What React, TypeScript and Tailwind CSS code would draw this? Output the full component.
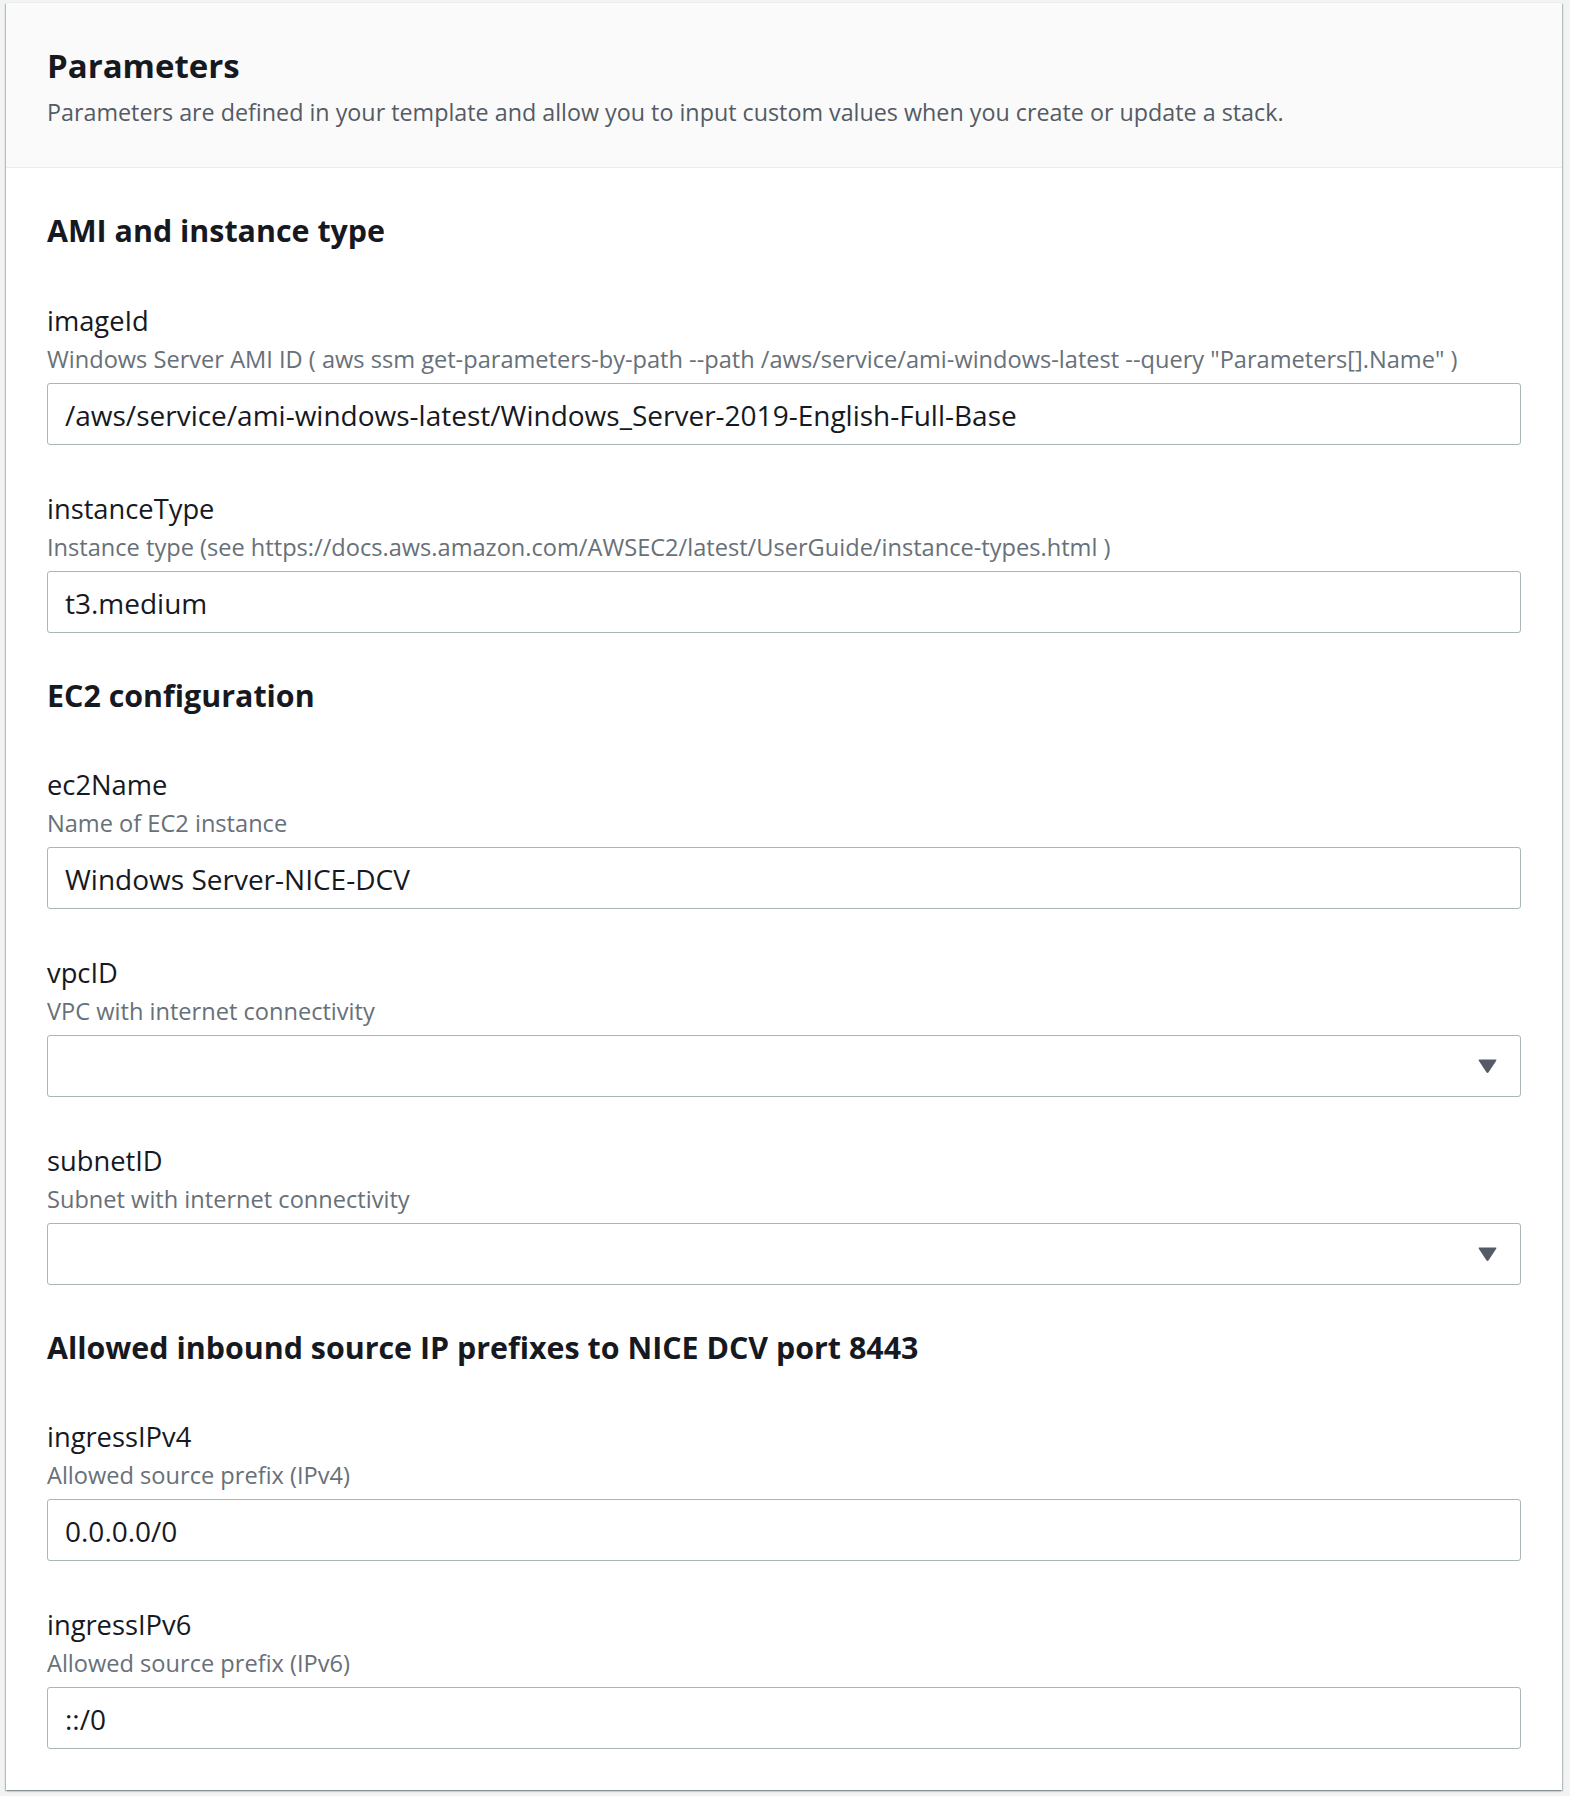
import React from "react";

const font = { fontFamily: '"Open Sans", "Noto Sans", sans-serif' };

function Field({ label, desc, value, select }: { label: string; desc: string; value?: string; select?: boolean }) {
  return (
    <div className="flex flex-col">
      <div className="h-[30px] leading-[30px] text-[27.3px] text-[#16191f]">{label}</div>
      <div className="mt-[10px] h-[26px] leading-[26px] text-[23.6px] text-[#687078] whitespace-nowrap">{desc}</div>
      <div className="mt-[11px] h-[62px] rounded-[3px] border border-[#aab7b8] bg-white flex items-center pl-[17px] pr-[22px]">
        {select ? (
          <div className="ml-auto flex items-center">
            <svg width="21" height="16" viewBox="0 0 21 16">
              <path d="M2.5 1.5 H18.5 Q20 1.5 19.2 2.8 L11.6 14.2 Q10.5 15.6 9.4 14.2 L1.8 2.8 Q1 1.5 2.5 1.5 Z" fill="#545b64" />
            </svg>
          </div>
        ) : (
          <span className="pt-[1px] text-[28px] text-[#16191f] whitespace-nowrap">{value}</span>
        )}
      </div>
    </div>
  );
}

function SectionHeading({ children }: { children: React.ReactNode }) {
  return <div className="h-[36px] leading-[36px] text-[30.4px] font-bold text-[#16191f] whitespace-nowrap">{children}</div>;
}

export default function App() {
  return (
    <div className="min-h-[1796px] w-[1570px] bg-[#f2f3f3] pt-[3px] pl-[6px] pr-[8px] pb-[7px]" style={font}>
      <div className="bg-white shadow-[0_1px_2px_0_rgba(0,28,36,0.35),1px_1px_1px_0_rgba(0,28,36,0.15),-1px_1px_1px_0_rgba(0,28,36,0.15)]">
        <div className="bg-[#fafafa] border-b border-[#eaeded] px-[41px] pt-[45px] pb-[41px]">
          <div className="h-[36px] leading-[36px] text-[33px] font-bold text-[#16191f]">Parameters</div>
          <div className="mt-[14px] h-[28px] leading-[28px] text-[23.3px] text-[#545b64] whitespace-nowrap">
            Parameters are defined in your template and allow you to input custom values when you create or update a stack.
          </div>
        </div>
        <div className="px-[41px] pt-[45px] pb-[41px] flex flex-col">
          <SectionHeading>AMI and instance type</SectionHeading>
          <div className="mt-[57px]">
            <Field
              label="imageId"
              desc={'Windows Server AMI ID ( aws ssm get-parameters-by-path --path /aws/service/ami-windows-latest --query "Parameters[].Name" )'}
              value="/aws/service/ami-windows-latest/Windows_Server-2019-English-Full-Base"
            />
          </div>
          <div className="mt-[49px]">
            <Field
              label="instanceType"
              desc="Instance type (see https://docs.aws.amazon.com/AWSEC2/latest/UserGuide/instance-types.html )"
              value="t3.medium"
            />
          </div>
          <div className="mt-[45px]">
            <SectionHeading>EC2 configuration</SectionHeading>
          </div>
          <div className="mt-[56px]">
            <Field label="ec2Name" desc="Name of EC2 instance" value="Windows Server-NICE-DCV" />
          </div>
          <div className="mt-[49px]">
            <Field label="vpcID" desc="VPC with internet connectivity" select />
          </div>
          <div className="mt-[49px]">
            <Field label="subnetID" desc="Subnet with internet connectivity" select />
          </div>
          <div className="mt-[45px]">
            <SectionHeading>Allowed inbound source IP prefixes to NICE DCV port 8443</SectionHeading>
          </div>
          <div className="mt-[56px]">
            <Field label="ingressIPv4" desc="Allowed source prefix (IPv4)" value="0.0.0.0/0" />
          </div>
          <div className="mt-[49px]">
            <Field label="ingressIPv6" desc="Allowed source prefix (IPv6)" value="::/0" />
          </div>
        </div>
      </div>
    </div>
  );
}
